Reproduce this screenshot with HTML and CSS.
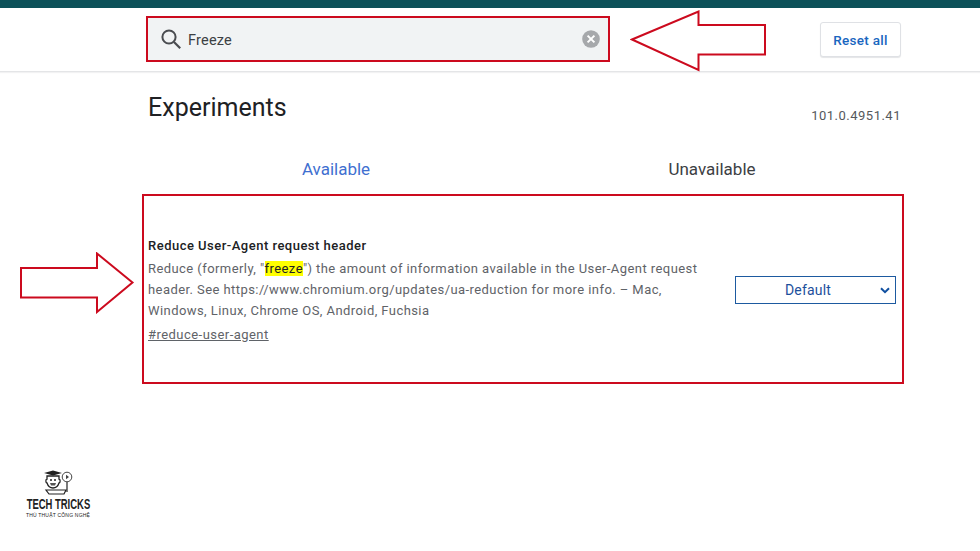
FILE: index.html
```html
<!DOCTYPE html>
<html lang="en">
<head>
<meta charset="utf-8">
<title>Experiments</title>
<link rel="stylesheet" href="styles.css">
</head>
<body>
<div class="topbar"></div>
<header class="header">
  <div class="search">
    <svg class="search-icon" width="22" height="22" viewBox="0 0 22 22"><circle cx="9" cy="9" r="6.6" fill="none" stroke="#4a4c50" stroke-width="2"/><path d="M14 14l6.2 6.2" stroke="#4a4c50" stroke-width="2.2" fill="none"/></svg>
    <span class="search-text">Freeze</span>
    <svg class="clear-icon" width="18" height="18" viewBox="0 0 18 18"><circle cx="9" cy="9" r="8.8" fill="#a6a8ab"/><path d="M5.6 5.6l6.8 6.8M12.4 5.6l-6.8 6.8" stroke="#fff" stroke-width="2"/></svg>
  </div>
  <button class="reset">Reset all</button>
</header>
<main class="main">
  <div class="title-row">
    <h1 class="title">Experiments</h1>
    <span class="version">101.0.4951.41</span>
  </div>
  <div class="tabs">
    <span class="tab tab-active">Available</span>
    <span class="tab">Unavailable</span>
  </div>
  <section class="card">
    <div class="card-text">
      <h2 class="exp-name">Reduce User-Agent request header</h2>
      <p class="exp-desc">Reduce (formerly, "<span class="hl">freeze</span>") the amount of information available in the User-Agent request header. See https://www.chromium.org/updates/ua-reduction for more info. – Mac, Windows, Linux, Chrome OS, Android, Fuchsia</p>
      <a class="exp-link">#reduce-user-agent</a>
    </div>
    <div class="select">
      <span class="select-label">Default</span>
      <svg class="chevron" width="10" height="7" viewBox="0 0 10 7"><path d="M1 1.2l4 4 4-4" fill="none" stroke="#0f4fa0" stroke-width="2"/></svg>
    </div>
  </section>
</main>
<svg class="arrow arrow-left" width="138" height="62" viewBox="0 0 138 62"><path d="M2 29.500L68.500 1.500V15H135V44.500H68.500V60Z" fill="#fff" stroke="#cc0a1e" stroke-width="2"/></svg>
<svg class="arrow arrow-right" width="116" height="62" viewBox="0 0 116 62"><path d="M112.500 30.500L77 1.500V16H1V45.500H77V60Z" fill="#fff" stroke="#cc0a1e" stroke-width="2"/></svg>
<div class="logo">
  <svg class="logo-mark" width="30" height="27" viewBox="0 0 30 27"><path d="M1 3L10 .6L19 3L10 5.400Z" fill="#222"/><path d="M4 6h12v3c1.500 0 1.500 4 0 4-1 3-3 5-6 5s-5-2-6-5c-1.500 0-1.500-4 0-4Z" fill="#fff" stroke="#222" stroke-width="1.300"/><path d="M7 10h2M11 10h2" stroke="#222" stroke-width="1.500"/><path d="M7 13h6l-1 2.500H8Z" fill="#555"/><path d="M3 20h20l-2 4H6Z" fill="#fff" stroke="#222" stroke-width="1.200"/><path d="M24 12v10" stroke="#222" stroke-width="1.200"/><circle cx="24" cy="7" r="4.800" fill="#fff" stroke="#444"/><path d="M23 4.800l3 2.200-3 2.200Z" fill="#444"/></svg>
  <div class="logo-name">TECH TRICKS</div>
  <div class="logo-sub">THỦ THUẬT CÔNG NGHỆ</div>
</div>
</body>
</html>
```
FILE: styles.css
```css
* { box-sizing: border-box; }
html, body { margin: 0; padding: 0; }
body {
  position: relative;
  width: 980px;
  height: 551px;
  overflow: hidden;
  background: #fff;
  font-family: Roboto, "Liberation Sans", sans-serif;
}
.topbar { height: 8px; background: #0c5159; }
.header {
  height: 64px;
  display: flex;
  align-items: flex-start;
  padding: 8px 79px 0 146px;
  justify-content: space-between;
  border-bottom: 1px solid #e4e5e7;
  box-shadow: 0 1px 1px #f2f2f3;
}
.search {
  width: 464px;
  height: 46px;
  display: flex;
  align-items: center;
  padding: 0 8px 0 12px;
  background: #f1f3f4;
  border: 2px solid #cc0a1e;
}
.search-icon { flex: none; }
.search-text {
  margin-left: 6px;
  padding-top: 2px;
  flex: 1;
  font-size: 14.500px;
  letter-spacing: .2px;
  color: #3c4043;
}
.clear-icon { flex: none; }
.reset {
  width: 81px;
  height: 35px;
  margin-top: 6px;
  padding: 0;
  background: #fff;
  border: 1px solid #dfe1e5;
  border-radius: 3px;
  box-shadow: 0 1px 1px #e4e5e7;
  color: #1a66c0;
  font: 500 13.500px Roboto, sans-serif;
  letter-spacing: .3px;
}
.main { width: 752px; margin-left: 148px; }
.title-row {
  display: flex;
  justify-content: space-between;
  align-items: flex-start;
  padding-top: 22px;
}
.title {
  margin: 0;
  font-size: 25px;
  line-height: 28px;
  font-weight: 400;
  letter-spacing: .02px;
  color: #202124;
}
.version {
  margin: 14px -1px 0 0;
  font-size: 13px;
  line-height: 16px;
  letter-spacing: .5px;
  color: #55585c;
}
.tabs { display: flex; margin-top: 32px; height: 38px; }
.tab {
  flex: 1;
  text-align: center;
  font-size: 17px;
  line-height: 26px;
  color: #3c4043;
}
.tab-active { color: #3f6fd0; }
.card {
  display: flex;
  align-items: center;
  justify-content: space-between;
  width: 762px;
  height: 190px;
  margin: 0 0 0 -6px;
  padding: 0 6px 1px 4px;
  border: 2px solid #cc0a1e;
}
.card-text { width: 565px; padding-top: 2px; }
.exp-name {
  margin: 0 0 2px;
  font-size: 13px;
  line-height: 21px;
  font-weight: 500;
  letter-spacing: .49px;
  color: #202124;
}
.exp-desc {
  margin: 0;
  font-size: 13px;
  line-height: 21px;
  letter-spacing: .43px;
  color: #5f6368;
}
.hl { background: #ffff00; color: #202124; }
.exp-link {
  display: block;
  margin-top: 3px;
  font-size: 13px;
  line-height: 21px;
  letter-spacing: .46px;
  color: #5f6368;
  text-decoration: underline;
}
.select {
  position: relative;
  width: 161px;
  height: 28px;
  border: 1px solid #1d5aa0;
  display: flex;
  align-items: center;
  justify-content: center;
  margin-top: 2px;
  padding-right: 15px;
}
.select-label { font-size: 14px; letter-spacing: .2px; color: #1c4f9c; }
.chevron { position: absolute; right: 5px; top: 10px; }
.arrow { position: absolute; }
.arrow-left { left: 630px; top: 10px; }
.arrow-right { left: 20px; top: 252px; }
.logo {
  position: absolute;
  left: 18px;
  top: 470px;
  width: 80px;
  display: flex;
  flex-direction: column;
  align-items: center;
  color: #222;
}
.logo-mark { display: block; }
.logo-name {
  font-family: "Liberation Sans", sans-serif;
  font-size: 15px;
  line-height: 14px;
  font-weight: 700;
  transform: scaleX(.63);
  white-space: nowrap;
}
.logo-sub {
  font-family: "Liberation Sans", sans-serif;
  font-size: 5px;
  line-height: 8px;
  letter-spacing: .2px;
  white-space: nowrap;
}
```
